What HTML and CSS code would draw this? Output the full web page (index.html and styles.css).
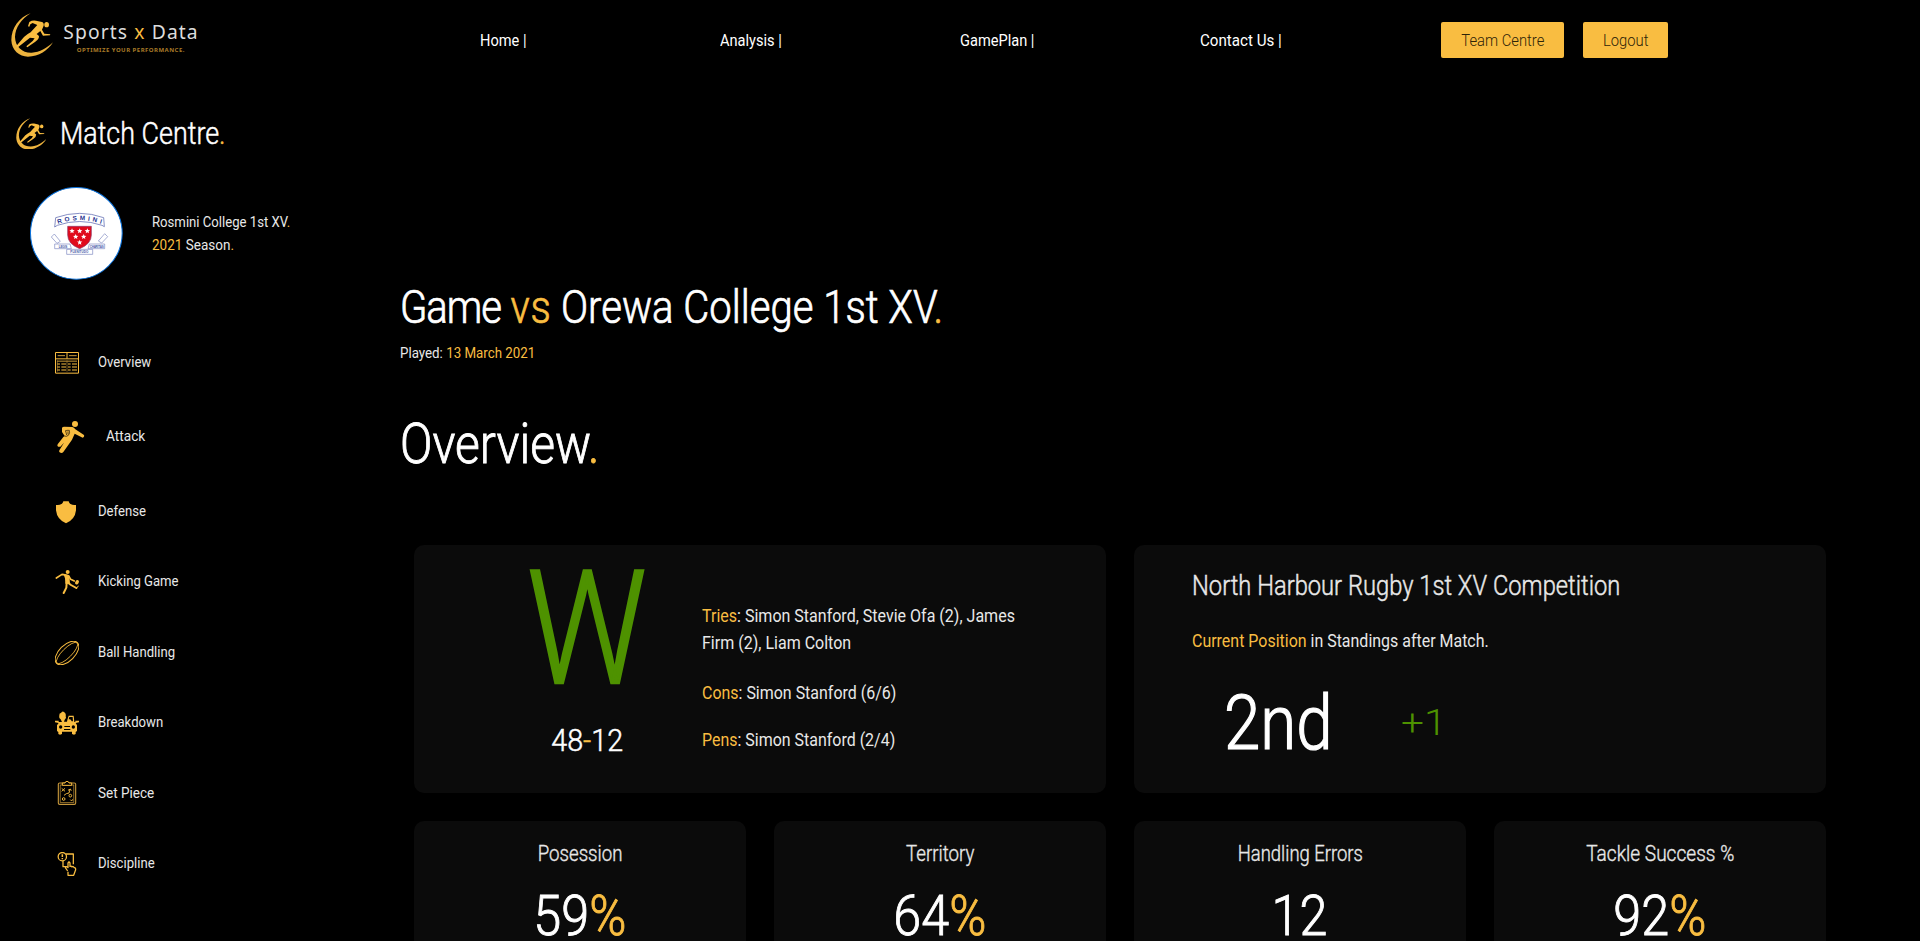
FILE: index.html
```
<!DOCTYPE html>
<html lang="en">
<head>
<meta charset="utf-8">
<title>Sports x Data</title>
<link rel="stylesheet" href="styles.css">
</head>
<body>
<svg width="0" height="0" class="defs">
  <symbol id="runner" viewBox="33 40 127 132">
    <path d="M92 41 C58 52 34 85 34 122 C35 152 58 171 84 171 C116 171 145 152 159 128 C140 146 120 158 95 159 C68 160 46 143 45 112 C46 84 64 58 92 41 Z" fill="#edb33e"/>
    <ellipse cx="140" cy="75" rx="7" ry="8" fill="#f9bd41"/>
    <path d="M84 80 L88 67 Q97 61 108 63 L126 67 Q133 70 131 78 L126 90 L133 102 L151 104 L150 107 L129 108 L121 94 L110 103 L117 109 Q118 118 106 126 L82 143 L79 140 L98 124 L104 116 L90 114 L52 144 L49 139 L72 112 Q82 103 92 98 L112 76 L98 70 L91 74 L88 81 Z" fill="#f9bd41"/>
  </symbol>
</svg>
<header class="topbar">
  <div class="brand">
    <svg class="logo-mark"><use href="#runner"/></svg>
    <div class="wordmark">
      <div class="wordmark-name">Sports <span class="accent">x</span> Data</div>
      <div class="wordmark-tag">OPTIMIZE YOUR PERFORMANCE.</div>
    </div>
  </div>
  <nav class="nav">
    <a class="nav-link"><span class="fit">Home |</span></a>
    <a class="nav-link"><span class="fit">Analysis |</span></a>
    <a class="nav-link"><span class="fit">GamePlan |</span></a>
    <a class="nav-link"><span class="fit nav-contact">Contact Us |</span></a>
  </nav>
  <div class="actions">
    <button class="btn btn-team"><span class="fit mid">Team Centre</span></button>
    <button class="btn btn-logout"><span class="fit mid">Logout</span></button>
  </div>
</header>

<div class="page">
  <aside class="sidebar">
    <div class="side-title">
      <svg class="side-mark"><use href="#runner"/></svg>
      <h2 class="side-heading fit">Match Centre<span class="accent">.</span></h2>
    </div>
    <div class="team">
      <svg class="avatar" viewBox="90 51 278 278">
        <circle cx="229" cy="190" r="137.5" fill="#fff" stroke="#0b74e0" stroke-width="3"/>
        <path d="M167 143 Q239 117 311 143 L313 170 L306 166 Q239 143 172 166 L164 171 Z" fill="#fff" stroke="#4a58a8" stroke-width="2"/>
        <path id="banner" d="M174 162 Q239 139 306 162" fill="none"/>
        <text class="crest-name"><textPath href="#banner" textLength="132">ROSMINI</textPath></text>
        <path d="M203 169 H274 V195 Q274 222 239 236 Q203 222 203 195 Z" fill="#e00b1c" stroke="#8a3a6a" stroke-width="2"/>
        <g fill="#fff">
          <path id="star" d="M216 175 l2.2 5.3 5.8 .4 -4.4 3.7 1.4 5.6 -5 -3 -5 3 1.4 -5.6 -4.4 -3.7 5.8 -.4z"/>
          <use href="#star" x="23"/><use href="#star" x="46"/><use href="#star" x="11" y="17"/><use href="#star" x="35" y="17"/><use href="#star" x="23" y="34"/>
        </g>
        <g fill="#fff" stroke="#7c86c0" stroke-width="2">
          <path d="M154 201 L163 192 L181 214 L171 220 Z M323 200 L314 191 L295 213 L305 219 Z"/>
          <path d="M164 222 H210 L214 236 H164 Z M314 222 H268 L264 236 H314 Z M200 238 H278 V253 H200 Z"/>
        </g>
        <g class="crest-motto"><text x="176" y="233" textLength="26">LEGIS</text><text x="269" y="233" textLength="42">CHARITAS</text><text x="211" y="249" textLength="54">PLENITUDO</text></g>
      </svg>
      <div class="team-text">
        <div><span class="fit">Rosmini College 1st XV<span class="accent">.</span></span></div>
        <div><span class="fit season"><span class="accent">2021</span> Season<span class="accent">.</span></span></div>
      </div>
    </div>
    <ul class="menu">
      <li class="menu-item">
        <svg class="icon" viewBox="45 63 72 72"><path fill="none" stroke="#f9bd41" stroke-width="3" d="M46.5 67.5 H115.5 V129.5 H46.5 Z M46.5 86.5 H115.5 M81 67 V86"/><path fill="none" stroke="#c99a38" stroke-width="3" d="M53 77 H75 M87 77 H110 M51 93.5 H111"/><path fill="none" stroke="#f9bd41" stroke-width="3.4" d="M51 102 H60 M64 102 H78 M84 102 H92 M96 102 H111 M51 111 H60 M64 111 H78 M84 111 H92 M96 111 H111 M51 120 H60 M64 120 H78 M84 120 H92 M96 120 H111"/><path fill="none" stroke="#a98030" stroke-width="2" d="M52 91 V125 M81 91 V125"/></svg>
        <span class="fit">Overview</span>
      </li>
      <li class="menu-item">
        <svg class="icon icon-lg" viewBox="45 273 96 96"><circle cx="105" cy="282" r="9" fill="#f9bd41"/><path fill="#f9bd41" d="M66 294 Q67 290 73 290 L97 291 Q102 292 106 298 L132 315 Q134 321 128 323 L104 311 L96 329 L70 366 Q65 371 59 367 Q56 364 59 359 L72 338 L61 350 Q55 352 52 347 L53 343 L70 321 L74 318 L66 306 Z"/><path d="M75 303 Q80 300 88 301 Q91 309 85 316 Q79 321 73 318 M77 303 L80 315 M84 304 V313" fill="none" stroke="#382a0c" stroke-width="2.4"/></svg>
        <span class="fit attack">Attack</span>
      </li>
      <li class="menu-item">
        <svg class="icon" viewBox="45 509 72 72"><path d="M70 513 H86 Q89 523 97 523 Q103 524 108 524 V540 Q105 568 78 579 Q51 568 48 540 V524 Q53 524 59 523 Q67 523 70 513 Z" fill="#f9bd41"/></svg>
        <span class="fit">Defense</span>
      </li>
      <li class="menu-item">
        <svg class="icon" viewBox="45 720 72 72"><g fill="none" stroke="#f9bd41" stroke-linecap="round" stroke-linejoin="round"><path stroke-width="5" d="M49 744 L66 733 L75 735 M87 739 L92 748 L103 753"/><path stroke-width="6" d="M80 758 L79 773 L71 789 M84 758 L93 765 L109 774"/><path stroke-width="3" d="M110 774 L115 768"/></g><path d="M70 731 Q80 731 88 736 L90 761 H76 L75 745 Z" fill="#f9bd41"/><circle cx="83" cy="726" r="6" fill="#f9bd41"/><ellipse cx="111" cy="757" rx="5" ry="7" transform="rotate(30 111 757)" fill="#f9bd41"/></svg>
        <span class="fit">Kicking Game</span>
      </li>
      <li class="menu-item">
        <svg class="icon" viewBox="45 63 72 72"><g fill="none" stroke="#f9bd41"><ellipse stroke-width="3" cx="81" cy="99" rx="44" ry="24" transform="rotate(-45 81 99)"/><ellipse stroke-width="2.5" cx="81" cy="99" rx="43" ry="14" transform="rotate(-45 81 99)"/></g></svg>
        <span class="fit">Ball Handling</span>
      </li>
      <li class="menu-item">
        <svg class="icon" viewBox="45 273 72 72"><path fill="#f9bd41" d="M66 306 L62 298 Q56 295 58 288 Q57 279 63 279 Q67 271 73 277 Q79 281 77 289 Q80 295 74 299 L72 305 H81 L82 300 L86 287 H101 L103 306 H106 V302 H117 V307 L107 309 L111 316 V333 L107 336 V342 L102 344 L96 342 V335 H66 V342 L60 344 L55 342 V336 L51 333 V316 L56 309 L45 307 V302 H56 V306 Z"/><path fill="#000" d="M86 298 L88 291 H98 L99 304 H95 Q93 296 86 298 Z M73 318 H90 V321 H73 Z M72 327 H91 V330 H72 Z"/><circle cx="62" cy="321" r="5" fill="#000"/><circle cx="100" cy="321" r="5" fill="#000"/></svg>
        <span class="fit">Breakdown</span>
      </li>
      <li class="menu-item">
        <svg class="icon" viewBox="45 486 72 72"><g fill="none" stroke="#c4953a" stroke-width="3.4"><rect x="55" y="492" width="52" height="64" rx="4"/><rect x="60.500" y="498" width="41" height="52" stroke-width="2"/></g><path d="M67 499 V492 H75 Q76 487 81 487 Q86 487 87 492 H95 V499 Z" fill="#000" stroke="#f9bd41" stroke-width="3"/><path fill="none" stroke="#f9bd41" stroke-width="2.800" d="M65 508 L75 517 M75 508 L65 517 M84 514 L91 510 L94 515 M90 511 L87 522 L79 524 L72 529"/><g fill="none" stroke="#f9bd41" stroke-width="2.800"><circle cx="91" cy="530" r="4"/><circle cx="71" cy="540" r="4"/><path d="M91 542 L95 546 L98 541"/></g></svg>
        <span class="fit set-piece">Set Piece</span>
      </li>
      <li class="menu-item">
        <svg class="icon" viewBox="45 696 72 72"><g fill="none" stroke="#f9bd41" stroke-width="3.800" stroke-linejoin="round"><circle cx="67" cy="710" r="12.500"/><path d="M67 703 V711 M67 714 V718" stroke-width="4.500"/><path d="M78 702 H100 V733 M69 723 V740 H79"/><path d="M83 753 L76 743 Q78 737 84 743 V729 Q87 723 90 729 V741 M90 740 Q94 736 96 741 Q100 737 102 743 Q107 742 107 749 L101 766 H84 V755"/></g></svg>
        <span class="fit">Discipline</span>
      </li>
    </ul>
  </aside>

  <main class="content">
    <h1 class="game-title fit"><span class="tight">Game</span> <span class="accent loose">vs</span> Orewa College 1st XV<span class="accent">.</span></h1>
    <p class="played fit">Played: <span class="accent">13 March 2021</span></p>
    <h2 class="section-title fit">Overview<span class="accent">.</span></h2>

    <div class="cards-lg">
      <section class="card result">
        <div class="result-left">
          <div class="result-letter fit mid">W</div>
          <div class="result-score fit mid">48<span class="accent">-</span>12</div>
        </div>
        <div class="scorers">
          <p class="fit tries"><span class="accent">Tries</span>: Simon Stanford, Stevie Ofa (2), James<br>Firm (2), Liam Colton</p>
          <p class="fit"><span class="accent">Cons</span>: Simon Stanford (6/6)</p>
          <p class="fit"><span class="accent">Pens</span>: Simon Stanford (2/4)</p>
        </div>
      </section>
      <section class="card standing">
        <h3 class="standing-title fit">North Harbour Rugby 1st XV Competition</h3>
        <p class="standing-text fit"><span class="accent">Current Position</span> in Standings after Match.</p>
        <div class="standing-row">
          <span class="position fit">2nd</span>
          <span class="change fit">+1</span>
        </div>
      </section>
    </div>

    <div class="cards-sm">
      <section class="card stat"><h4 class="fit mid">Posession</h4><div class="stat-value fit mid">59<span class="accent">%</span></div></section>
      <section class="card stat"><h4 class="fit mid">Territory</h4><div class="stat-value fit mid">64<span class="accent">%</span></div></section>
      <section class="card stat"><h4 class="fit mid handling">Handling Errors</h4><div class="stat-value fit mid">12</div></section>
      <section class="card stat"><h4 class="fit mid tackle">Tackle Success %</h4><div class="stat-value fit mid">92<span class="accent">%</span></div></section>
    </div>
  </main>
</div>
</body>
</html>
```

FILE: styles.css
```
:root {
  --accent: #f9bd41;
  --text: #e8e8e8;
  --card: #0b0b0b;
  --green: #4e9200;
  --font: Roboto, "Liberation Sans", sans-serif;
}

* { box-sizing: border-box; }

body {
  margin: 0;
  height: 941px;
  overflow: hidden;
  background: #000;
  color: var(--text);
  font-family: var(--font);
}

.defs { display: block; height: 0; }

.accent { color: var(--accent); }

h1, h2, h3, h4, p, ul { margin: 0; padding: 0; font-weight: normal; }

/* condensed lettering */
.fit {
  display: block;
  width: max-content;
  white-space: nowrap;
  transform: scaleX(var(--sx, 0.85));
  transform-origin: left center;
}

.fit.mid { margin-left: auto; margin-right: auto; transform-origin: center; }

/* display sizes: light weight with slightly thickened strokes */
.side-heading,
.game-title,
.section-title,
.result-letter,
.result-score,
.standing-title,
.position,
.change,
.stat h4,
.stat-value {
  font-weight: 300;
  -webkit-text-stroke: 0.016em currentColor;
}

.side-heading .accent,
.game-title .accent,
.section-title .accent,
.result-score .accent,
.stat-value .accent { -webkit-text-stroke-color: var(--accent); }

.topbar {
  display: flex;
  align-items: flex-start;
  height: 80px;
  padding-left: 11px;
}

.brand {
  display: flex;
  align-items: flex-start;
  flex: none;
  width: 469px;
  padding-top: 13.3px;
}

.logo-mark { width: 42.3px; height: 44px; }

.wordmark { margin-left: 10px; padding-top: 5.7px; }

.wordmark-name {
  font-family: "Noto Sans", "Liberation Sans", sans-serif;
  font-size: 19.3px;
  letter-spacing: 1.1px;
  line-height: 26px;
  color: #dcdcdc;
}

.wordmark-tag {
  margin-left: 13.5px;
  font-family: "Noto Sans", "Liberation Sans", sans-serif;
  font-size: 6px;
  font-weight: 700;
  letter-spacing: 0.48px;
  line-height: 10px;
  color: #a87a28;
}

.nav { display: flex; flex: none; padding-top: 29px; }

.nav-link { --sx: 0.84; width: 240px; font-size: 17.4px; line-height: 22px; color: #fff; }

.nav-contact { --sx: 0.87; }

.actions { display: flex; gap: 19px; padding: 22px 0 0 1px; }

.btn {
  height: 36px;
  padding: 0;
  border: 0;
  border-radius: 2px;
  background: var(--accent);
  color: #2e2408;
  font-family: var(--font);
  font-size: 17.4px;
  font-weight: 300;
}

.btn-team { width: 123px; }
.btn-logout { width: 85px; }

.page { display: flex; }

.sidebar { width: 400px; flex: none; }

.side-title {
  display: flex;
  align-items: center;
  height: 40px;
  margin-top: 33.5px;
  padding-left: 15.5px;
}

.side-mark { width: 30.5px; height: 31.7px; }

.side-heading { --sx: 0.882; margin-left: 13.5px; font-size: 30.5px; line-height: 40px; color: #fff; }

.team { display: flex; align-items: center; margin-top: 33.5px; padding-left: 30px; }

.avatar { width: 92.7px; height: 92.7px; }

.crest-name { font: bold 19px "Liberation Sans", sans-serif; fill: #26338f; }
.crest-motto { font: bold 9px "Liberation Sans", sans-serif; fill: #4a58a8; }

.team-text { --sx: 0.865; margin-left: 29px; padding-top: 2px; font-size: 15.2px; line-height: 23px; }
.season { --sx: 0.89; }

.menu {
  --sx: 0.875;
  display: flex;
  flex-direction: column;
  gap: 46.4px;
  margin-top: 71.3px;
  padding-left: 55px;
  list-style: none;
}

.menu-item { display: flex; align-items: center; gap: 19.4px; font-size: 15px; line-height: 20px; }
.menu-item span { padding-bottom: 1.5px; }
.menu-item .attack { --sx: 0.91; padding-bottom: 3px; }
.menu-item .set-piece { --sx: 0.9; }

.icon { width: 24px; height: 24px; }
.icon-lg { width: 32px; height: 32px; }

.content { padding-top: 198.4px; }

.game-title { --sx: 0.88; font-size: 45.5px; line-height: 60px; color: #fff; }
.tight { letter-spacing: -1.2px; }
.loose { letter-spacing: 0.6px; }

.played { --sx: 0.866; margin-top: 3.6px; font-size: 15.4px; line-height: 22px; }

.section-title { --sx: 0.87; margin-top: 44.9px; font-size: 55px; line-height: 70px; color: #fff; }

.cards-lg {
  display: grid;
  grid-template-columns: 692px 692px;
  gap: 28px;
  margin: 66px 0 0 14px;
}

.card { background: var(--card); border-radius: 10px; }

.cards-lg .card { height: 248px; }

.result { display: flex; }

.result-left { flex: none; width: 288px; padding-left: 58px; }

.result-letter { --sx: 0.845; margin-top: 23.8px; font-size: 158px; line-height: 120px; color: var(--green); }

.result-score { --sx: 0.94; margin-top: 32.8px; font-size: 30.5px; line-height: 40px; color: #fff; }

.scorers { padding-top: 58.3px; font-size: 18.8px; line-height: 27px; }
.scorers p { margin-bottom: 19.8px; }
.scorers .tries { --sx: 0.853; margin-bottom: 23px; }

.standing { padding: 23.7px 0 0 57.5px; }

.standing-title { --sx: 0.847; font-size: 28px; line-height: 34px; }

.standing-text { --sx: 0.832; margin-top: 24.2px; font-size: 19.2px; line-height: 27px; }

.standing-row {
  display: grid;
  grid-template-columns: 177px auto;
  align-items: center;
  margin-top: 29px;
  padding-left: 32px;
}

.position { --sx: 0.86; font-size: 76px; line-height: 80px; color: #fff; }

.change { --sx: 1.1; font-size: 37px; line-height: 80px; color: var(--green); -webkit-text-stroke-width: 0; }

.cards-sm {
  display: grid;
  grid-template-columns: repeat(4, 332px);
  gap: 28px;
  margin: 28px 0 0 14px;
}

.stat { height: 160px; padding-top: 16.6px; }

.stat h4 { --sx: 0.83; font-size: 22.5px; line-height: 32px; }
.stat .handling { --sx: 0.82; }
.stat .tackle { --sx: 0.848; }

.stat-value { --sx: 0.915; margin-top: 13.6px; font-size: 55px; line-height: 66px; color: #fff; }
```
